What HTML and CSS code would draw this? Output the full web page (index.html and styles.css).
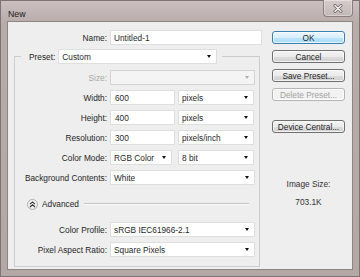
FILE: index.html
```html
<!DOCTYPE html>
<html lang="en">
<head>
    <meta charset="UTF-8">
    <title>New</title>
    <link rel="stylesheet" href="styles.css">
</head>
<body>

<div class="window">
    <div class="titlebar">
        <span class="title">New</span>
        <div class="close">
            <svg width="10" height="9" viewBox="0 0 10 9">
                <path d="M2 1.5 L8 7.5 M8 1.5 L2 7.5" stroke="#6f6666" stroke-width="3" stroke-linecap="round"/>
                <path d="M2 1.5 L8 7.5 M8 1.5 L2 7.5" stroke="#f4f2f2" stroke-width="1.4" stroke-linecap="round"/>
            </svg>
        </div>
    </div>

    <div class="client">
        <div class="form">
            <div class="row name-row">
                <label class="label">Name:</label>
                <div class="input wide">Untitled-1</div>
            </div>

            <fieldset class="group">
                <legend class="preset">
                    <span>Preset:</span>
                    <div class="select preset-select">Custom</div>
                </legend>

                <div class="row">
                    <label class="label disabled">Size:</label>
                    <div class="select full off"></div>
                </div>
                <div class="row">
                    <label class="label">Width:</label>
                    <div class="input num">600</div>
                    <div class="select unit">pixels</div>
                </div>
                <div class="row">
                    <label class="label">Height:</label>
                    <div class="input num">400</div>
                    <div class="select unit">pixels</div>
                </div>
                <div class="row">
                    <label class="label">Resolution:</label>
                    <div class="input num">300</div>
                    <div class="select unit">pixels/inch</div>
                </div>
                <div class="row">
                    <label class="label">Color Mode:</label>
                    <div class="select mode">RGB Color</div>
                    <div class="select unit">8 bit</div>
                </div>
                <div class="row">
                    <label class="label">Background Contents:</label>
                    <div class="select full">White</div>
                </div>

                <div class="advanced">
                    <span class="toggle">
                        <svg width="7" height="7" viewBox="0 0 7 7">
                            <path d="M1 3.2 L3.5 1 L6 3.2 M1 6 L3.5 3.8 L6 6" fill="none" stroke="#333" stroke-width="1.1"/>
                        </svg>
                    </span>
                    <span>Advanced</span>
                    <span class="rule"></span>
                </div>

                <div class="row">
                    <label class="label">Color Profile:</label>
                    <div class="select full">sRGB IEC61966-2.1</div>
                </div>
                <div class="row">
                    <label class="label">Pixel Aspect Ratio:</label>
                    <div class="select full">Square Pixels</div>
                </div>
            </fieldset>
        </div>

        <div class="side">
            <button class="btn default">OK</button>
            <button class="btn">Cancel</button>
            <button class="btn">Save Preset...</button>
            <button class="btn" disabled>Delete Preset...</button>
            <button class="btn central">Device Central...</button>

            <div class="image-size">
                <div>Image Size:</div>
                <div class="size-value">703.1K</div>
            </div>
        </div>
    </div>
</div>

</body>
</html>
```

FILE: styles.css
```css
body {
    margin: 0;
    font-family: "Liberation Sans", Arial, sans-serif;
    font-size: 8.3px;
    color: #1f1f1f;
}

.window {
    width: 360px;
    height: 277px;
    box-sizing: border-box;
    background: linear-gradient(#cbc0bf, #b8acab 22px, #b4a8a7);
    border: 1px solid #7e7373;
    padding: 0 6px 6px;
    display: flex;
    flex-direction: column;
}

.titlebar {
    height: 20px;
    display: flex;
    justify-content: space-between;
    align-items: flex-start;
}

.title {
    padding: 8px 0 0 1px;
    font-size: 8.8px;
    color: #1a1a1a;
}

.close {
    margin-top: -1px;
    width: 30px;
    height: 17px;
    box-sizing: border-box;
    border: 1px solid #8a7e7e;
    border-top: none;
    border-radius: 0 0 4px 4px;
    background: linear-gradient(#d6cccb, #c3b7b6);
    box-shadow: inset 0 0 0 1px rgba(255, 255, 255, 0.35);
    display: flex;
    align-items: center;
    justify-content: center;
}

.client {
    flex: 1;
    background-color: #eeeeee;
    border: 1px solid #8f8483;
    display: flex;
    padding-top: 8px;
}

.form {
    width: 254px;
}

.row {
    display: flex;
    align-items: center;
    gap: 3px;
    height: 15px;
    margin-bottom: 5px;
}

.name-row {
    padding-left: 7px;
    margin-bottom: 0;
}

.label {
    width: 92px;
    flex-shrink: 0;
    text-align: right;
    white-space: nowrap;
}

.label.disabled {
    color: #a8a8a8;
}

.input,
.select {
    height: 15px;
    box-sizing: border-box;
    background-color: #fff;
    border: 1px solid #dedede;
    display: flex;
    align-items: center;
    padding-left: 3px;
    white-space: nowrap;
}

.select {
    padding-right: 5px;
}

.select::after {
    content: "";
    margin-left: auto;
    border-left: 2.5px solid transparent;
    border-right: 2.5px solid transparent;
    border-top: 3px solid #111;
}

.select.off {
    background-color: #f4f4f4;
    border-color: #d4d4d4;
}

.select.off::after {
    border-top-color: #b0b0b0;
}

.wide {
    width: 152px;
}

.num {
    width: 65px;
    padding-left: 4px;
}

.unit {
    width: 76px;
}

.mode {
    width: 62px;
    margin-right: 3px;
}

.full {
    width: 145px;
}

.group {
    margin: 4px 0 0 6px;
    padding: 6px 0 4px 0;
    width: 246px;
    box-sizing: border-box;
    border: 1px solid #cdcdcd;
    min-width: 0;
}

.preset {
    display: flex;
    align-items: center;
    gap: 3px;
    height: 15px;
    margin-left: 6px;
    padding: 0 5px 0 8px;
}

.preset-select {
    width: 159px;
}

.advanced {
    display: flex;
    align-items: center;
    gap: 4px;
    height: 12px;
    margin: 13px 10px 12px 0;
    padding-left: 12px;
}

.toggle {
    width: 11px;
    height: 11px;
    box-sizing: border-box;
    border: 1px solid #b0b0b0;
    border-radius: 50%;
    background: radial-gradient(circle at 50% 35%, #ffffff, #e2e2e2);
    display: flex;
    align-items: center;
    justify-content: center;
}

.rule {
    flex: 1;
    height: 1px;
    margin-left: 1px;
    background-color: #c4c4c4;
    border-bottom: 1px solid #fbfbfb;
}

.side {
    margin-left: 10px;
    width: 73px;
    padding-top: 1px;
    display: flex;
    flex-direction: column;
    gap: 6px;
}

.btn {
    height: 13px;
    padding: 0;
    font-family: inherit;
    font-size: 8.3px;
    color: #1f1f1f;
    border: 1px solid #707070;
    border-radius: 3px;
    background: linear-gradient(#f3f3f3, #ebebeb 50%, #dddddd 51%, #d0d0d0);
    box-shadow: inset 0 0 0 1px rgba(255, 255, 255, 0.7);
}

.btn.default {
    border-color: #3c7fb1;
    background: linear-gradient(#eaf6fd, #d9f0fc 50%, #bee6fd 51%, #a7d9f5);
}

.btn:disabled {
    color: #a3a3a3;
    border-color: #b5b5b5;
    background: #f2f2f2;
}

.btn.central {
    margin-top: 13px;
}

.image-size {
    margin-top: 40px;
    text-align: center;
    color: #333;
}

.size-value {
    margin-top: 8px;
}
```
